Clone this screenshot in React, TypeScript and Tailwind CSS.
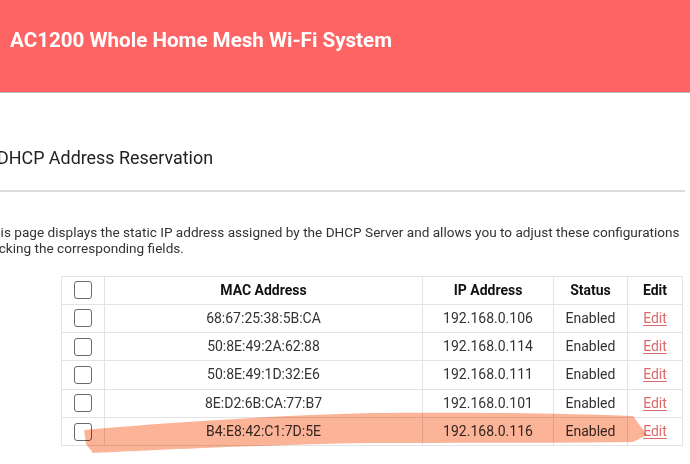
const rows = [
  { mac: "68:67:25:38:5B:CA", ip: "192.168.0.106" },
  { mac: "50:8E:49:2A:62:88", ip: "192.168.0.114" },
  { mac: "50:8E:49:1D:32:E6", ip: "192.168.0.111" },
  { mac: "8E:D2:6B:CA:77:B7", ip: "192.168.0.101" },
  { mac: "B4:E8:42:C1:7D:5E", ip: "192.168.0.116" },
];

function Box() {
  return <span className="block mx-auto w-[18px] h-[18px] rounded-[3px] border border-[#6b6b6b] bg-white" />;
}

export default function App() {
  return (
    <div className="relative w-[690px] h-[464px] overflow-hidden bg-white text-[#333] font-['Roboto',sans-serif]">
      {/* top bar */}
      <header className="h-[93px] bg-[#fe6463] border-b border-[#b9b9b9] pl-[10px] pt-[26px]">
        <h1 className="text-[20.6px] font-bold text-white leading-[28px]">AC1200 Whole Home Mesh Wi-Fi System</h1>
      </header>

      {/* section title */}
      <div className="pt-[52px]">
        <h2 className="-ml-[3px] text-[17.9px] font-normal leading-[26px] text-[#222]">DHCP Address Reservation</h2>
        <div className="mt-[19px] w-[685px] h-[2px] bg-[#dcdcdc]" />
      </div>

      <p className="mt-[32px] -ml-[15px] text-[13.6px] leading-[16px] text-[#333] whitespace-nowrap">
        This page displays the static IP address assigned by the DHCP Server and allows you to adjust these configurations
        <br />
        clicking the corresponding fields.
      </p>

      {/* table */}
      <table className="mt-[20px] ml-[61px] w-[621px] border-collapse text-[14px] table-fixed">
        <colgroup>
          <col className="w-[43px]" />
          <col className="w-[318px]" />
          <col className="w-[131px]" />
          <col className="w-[74px]" />
          <col className="w-[55px]" />
        </colgroup>
        <thead>
          <tr className="h-[27.5px]">
            <th className="border border-[#e3e3e3] p-0"><Box /></th>
            <th className="border border-[#e3e3e3] p-0 font-bold text-[#111]">MAC Address</th>
            <th className="border border-[#e3e3e3] p-0 font-bold text-[#111]">IP Address</th>
            <th className="border border-[#e3e3e3] p-0 font-bold text-[#111]">Status</th>
            <th className="border border-[#e3e3e3] p-0 font-bold text-[#111]">Edit</th>
          </tr>
        </thead>
        <tbody>
          {rows.map((r) => (
            <tr key={r.mac} className="h-[28.4px]">
              <td className="border border-[#e3e3e3] p-0"><Box /></td>
              <td className="border border-[#e3e3e3] p-0 text-center">{r.mac}</td>
              <td className="border border-[#e3e3e3] p-0 text-center">{r.ip}</td>
              <td className="border border-[#e3e3e3] p-0 text-center">Enabled</td>
              <td className="border border-[#e3e3e3] p-0 text-center">
                <a className="text-[#dc6a6a] underline underline-offset-2 decoration-[#dc6a6a]">Edit</a>
              </td>
            </tr>
          ))}
        </tbody>
      </table>

      {/* highlighter mark */}
      <svg className="absolute left-0 top-0 pointer-events-none mix-blend-multiply" width="690" height="464">
        <path
          d="M84 430 C 150 424, 260 416, 370 413 C 450 412, 560 413, 633 416 L 647 435 L 633 442 C 560 443, 450 443, 370 443 C 260 445, 160 450, 93 453 L 86 444 Z"
          fill="#fcb092"
          fillOpacity="0.95"
        />
      </svg>
    </div>
  );
}
